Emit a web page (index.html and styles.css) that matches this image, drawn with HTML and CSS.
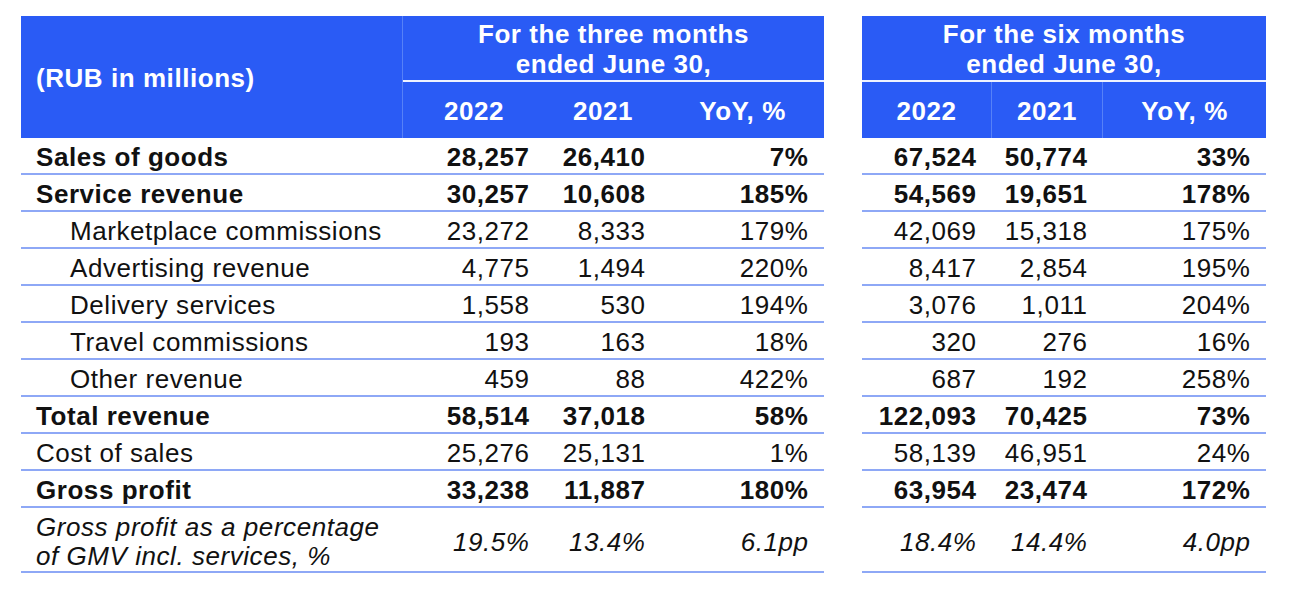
FILE: index.html
```html
<!DOCTYPE html>
<html lang="en">
<head>
<meta charset="utf-8">
<title>Revenue table</title>
<link rel="stylesheet" href="styles.css">
</head>
<body>
<div class="page">
  <div class="tbl tbl-left">
    <div class="head">
      <div class="h-label">(RUB in millions)</div>
      <div class="h-period">For the three months<br>ended June 30,</div>
      <div class="h-year">2022</div>
      <div class="h-year">2021</div>
      <div class="h-year">YoY, %</div>
    </div>
    <div class="row b"><div class="lab">Sales of goods</div><div class="num">28,257</div><div class="num">26,410</div><div class="num">7%</div></div>
    <div class="row b"><div class="lab">Service revenue</div><div class="num">30,257</div><div class="num">10,608</div><div class="num">185%</div></div>
    <div class="row"><div class="lab ind">Marketplace commissions</div><div class="num">23,272</div><div class="num">8,333</div><div class="num">179%</div></div>
    <div class="row"><div class="lab ind">Advertising revenue</div><div class="num">4,775</div><div class="num">1,494</div><div class="num">220%</div></div>
    <div class="row"><div class="lab ind">Delivery services</div><div class="num">1,558</div><div class="num">530</div><div class="num">194%</div></div>
    <div class="row"><div class="lab ind">Travel commissions</div><div class="num">193</div><div class="num">163</div><div class="num">18%</div></div>
    <div class="row"><div class="lab ind">Other revenue</div><div class="num">459</div><div class="num">88</div><div class="num">422%</div></div>
    <div class="row b"><div class="lab">Total revenue</div><div class="num">58,514</div><div class="num">37,018</div><div class="num">58%</div></div>
    <div class="row"><div class="lab">Cost of sales</div><div class="num">25,276</div><div class="num">25,131</div><div class="num">1%</div></div>
    <div class="row b"><div class="lab">Gross profit</div><div class="num">33,238</div><div class="num">11,887</div><div class="num">180%</div></div>
    <div class="row tall i"><div class="lab">Gross profit as a percentage<br>of GMV incl. services, %</div><div class="num">19.5%</div><div class="num">13.4%</div><div class="num">6.1pp</div></div>
  </div>

  <div class="tbl tbl-right">
    <div class="head">
      <div class="h-period">For the six months<br>ended June 30,</div>
      <div class="h-year sep">2022</div>
      <div class="h-year sep">2021</div>
      <div class="h-year">YoY, %</div>
    </div>
    <div class="row b"><div class="num">67,524</div><div class="num">50,774</div><div class="num">33%</div></div>
    <div class="row b"><div class="num">54,569</div><div class="num">19,651</div><div class="num">178%</div></div>
    <div class="row"><div class="num">42,069</div><div class="num">15,318</div><div class="num">175%</div></div>
    <div class="row"><div class="num">8,417</div><div class="num">2,854</div><div class="num">195%</div></div>
    <div class="row"><div class="num">3,076</div><div class="num">1,011</div><div class="num">204%</div></div>
    <div class="row"><div class="num">320</div><div class="num">276</div><div class="num">16%</div></div>
    <div class="row"><div class="num">687</div><div class="num">192</div><div class="num">258%</div></div>
    <div class="row b"><div class="num">122,093</div><div class="num">70,425</div><div class="num">73%</div></div>
    <div class="row"><div class="num">58,139</div><div class="num">46,951</div><div class="num">24%</div></div>
    <div class="row b"><div class="num">63,954</div><div class="num">23,474</div><div class="num">172%</div></div>
    <div class="row tall i"><div class="num">18.4%</div><div class="num">14.4%</div><div class="num">4.0pp</div></div>
  </div>
</div>
</body>
</html>
```

FILE: styles.css
```css
html, body {
  margin: 0;
  padding: 0;
  background: #ffffff;
}

.page {
  display: flex;
  gap: 38px;
  padding: 16px 0 0 21px;
  font-family: "Liberation Sans", Arial, sans-serif;
  font-size: 26px;
  letter-spacing: 0.55px;
  color: #111111;
}

.tbl-left { width: 803px; }
.tbl-right { width: 404px; }

.tbl-left .head,
.tbl-left .row {
  display: grid;
  grid-template-columns: 382px 142px 116px 163px;
}

.tbl-right .head,
.tbl-right .row {
  display: grid;
  grid-template-columns: 130px 111px 163px;
}

.head {
  background: #2a5bf5;
  color: #ffffff;
  font-weight: bold;
  grid-template-rows: 66px 56px;
}

.h-label {
  grid-row: 1 / span 2;
  display: flex;
  align-items: center;
  padding-left: 15px;
  padding-top: 2px;
  border-right: 1px solid #5681f7;
}

.h-period {
  grid-column: span 3;
  box-sizing: border-box;
  border-bottom: 2px solid #eef2ff;
  text-align: center;
  line-height: 30px;
  padding-top: 3px;
}

.h-year {
  display: flex;
  align-items: center;
  justify-content: center;
  padding-top: 2px;
}

.h-year.sep {
  border-right: 1px solid #5681f7;
}

.row {
  height: 37px;
  box-sizing: border-box;
  border-bottom: 2px solid #8ea8f6;
  align-items: center;
  line-height: 30px;
  padding-top: 3px;
}

.row.b { font-weight: bold; }
.row.i { font-style: italic; }
.row.tall {
  height: 65px;
  line-height: 29px;
  padding-top: 5px;
}

.lab {
  padding-left: 15px;
}

.lab.ind {
  padding-left: 49px;
}

.num {
  text-align: right;
  padding-right: 15.5px;
}
```
